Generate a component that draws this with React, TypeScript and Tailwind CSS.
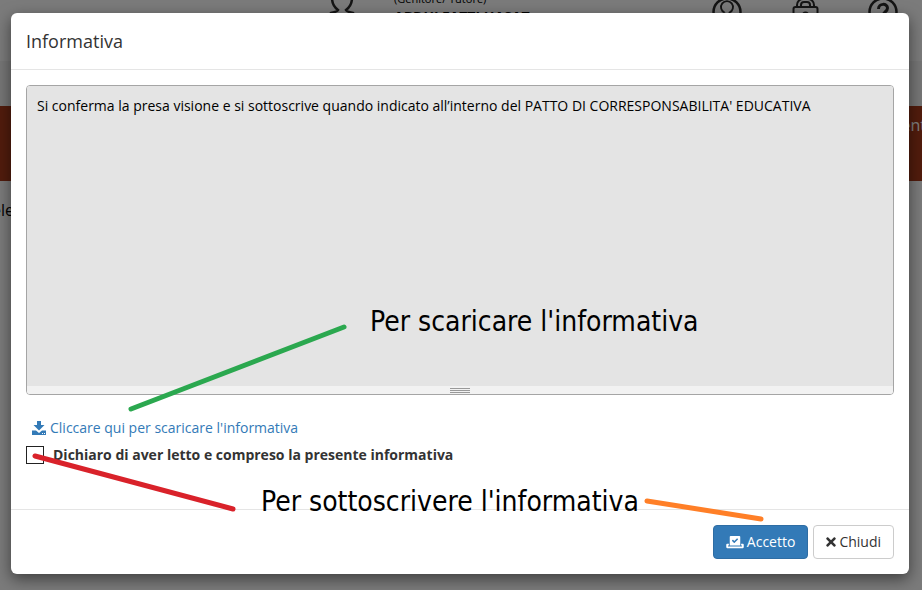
import { useState } from 'react';
import { FaTimes, FaVoteYea } from 'react-icons/fa';

const NOTICE =
    "Si conferma la presa visione e si sottoscrive quando indicato all’interno del PATTO DI CORRESPONSABILITA' EDUCATIVA";

function UserIcon() {
    return (
        <svg width="30" height="30" viewBox="0 0 30 30" fill="none" stroke="#2a2a2a" strokeWidth="2.5">
            <path d="M11 19c-4-3-6-7-6-12a10 9 0 0 1 20 0c0 5-2 9-6 12 1 2 3 2 7 3v7H4v-7c4-1 6-1 7-3z" />
        </svg>
    );
}

function ProfileIcon() {
    return (
        <svg width="30" height="30" viewBox="0 0 30 30" fill="none" stroke="#2a2a2a">
            <circle cx="15" cy="15" r="13.5" strokeWidth="2.5" />
            <path d="M12.5 15.500a6 6 0 1 1 5 0v2l5 2M12.5 15.500v2l-5 2" strokeWidth="1.8" />
        </svg>
    );
}

function PasswordIcon() {
    return (
        <svg width="30" height="30" viewBox="0 0 30 30" fill="none" stroke="#2a2a2a" strokeWidth="2">
            <path d="M7 10V8a6 6 0 0 1 6-6h5a6 6 0 0 1 6 6v2M11 10V8a3 3 0 0 1 3-3h3a3 3 0 0 1 3 3v2z" />
            <rect x="3.500" y="10" width="24" height="19" rx="2" />
            <circle cx="15.500" cy="18" r="2.5" />
        </svg>
    );
}

function HelpIcon() {
    return (
        <svg width="30" height="30" viewBox="0 0 30 30" fill="none" stroke="#2a2a2a">
            <circle cx="15" cy="15" r="13.5" strokeWidth="2.5" />
            <path d="M10.5 12c0-6 9-6 9-1 0 4-4.500 3.500-4.500 8M15 21v3" strokeWidth="3" />
        </svg>
    );
}

function DownloadIcon() {
    return (
        <svg width="14" height="14" viewBox="0 0 14 14" fill="currentColor" aria-hidden="true">
            <path d="M5 0h4v4h3.500L7 9.500 1.500 4H5z" />
            <path fillRule="evenodd" d="M0 9.500h4L7 12l3-2.500h4V14H0zM10 12v1h1v-1zM12 12v1h1v-1z" />
        </svg>
    );
}

function PageBehind() {
    return (
        <div className="text-black">
            <header className="h-[61px] overflow-hidden bg-[#f6f6f6]">
                <div className="-mt-[10px] flex items-start pl-[327px] pr-6">
                    <div className="pt-[1px]">
                        <UserIcon />
                    </div>
                    <div className="ml-[37px] flex-1 whitespace-nowrap leading-4">
                        <p className="pt-px text-[11px]">(Genitore/ Tutore)</p>
                        <p className="text-sm font-bold">ABDULFATTI HASAT</p>
                    </div>
                    <nav className="flex gap-12 pt-[7px]">
                        <a href="#profilo" aria-label="Profilo"><ProfileIcon /></a>
                        <a href="#password" aria-label="Password"><PasswordIcon /></a>
                        <a href="#aiuto" aria-label="Aiuto"><HelpIcon /></a>
                    </nav>
                </div>
            </header>
            <div className="h-[45px] bg-[#ececec]" />
            <div className="flex h-[75px] justify-end bg-[#a4381b] pt-[7px]">
                <span className="-mr-1 text-base text-white">ent</span>
            </div>
            <p className="-ml-2 pt-[15px] text-base leading-7">ele</p>
        </div>
    );
}

function Annotations() {
    return (
        <div className="pointer-events-none absolute inset-0 font-['DejaVu_Sans_Condensed','DejaVu_Sans',sans-serif] text-[28px] leading-8 text-black">
            <svg className="absolute left-0 top-0" width="922" height="590" fill="none" strokeWidth="5" strokeLinecap="round">
                <path d="M131 409L344 327" stroke="#2ba84f" />
                <path d="M35 456L233 509" stroke="#d9222a" />
                <path d="M647 501L761 519" stroke="#ff7f27" />
            </svg>
            <p className="absolute left-[370px] top-[306px] whitespace-nowrap">Per scaricare l'informativa</p>
            <p className="absolute left-[261px] top-[486px] whitespace-nowrap">Per sottoscrivere l'informativa</p>
        </div>
    );
}

export default function App() {
    const [accepted, setAccepted] = useState(false);

    return (
        <div className="relative h-screen overflow-hidden bg-[#f6f6f6] font-['Open_Sans','Noto_Sans',sans-serif] text-sm text-[#333]">
            <PageBehind />

            <div className="absolute inset-0 bg-black/50 pl-[11px] pr-[13px] pt-[13px]">
                <div
                    role="dialog"
                    aria-labelledby="dialog-title"
                    className="rounded-md bg-white shadow-[0_5px_15px_rgba(0,0,0,0.5)]"
                >
                    <div className="border-b border-[#e5e5e5] p-[15px]">
                        <h4 id="dialog-title" className="text-lg leading-[26px]">Informativa</h4>
                    </div>

                    <div className="px-[15px] pt-[15px]">
                        <div className="overflow-hidden rounded-[4px] border border-[#a5a5a5]">
                            <textarea
                                readOnly
                                aria-label="Testo dell'informativa"
                                value={NOTICE}
                                className="block h-[300px] w-full resize-none bg-[#e4e4e4] px-[10px] py-[10px] leading-5 text-black outline-none"
                            />
                            <div className="flex h-2 flex-col items-center justify-center gap-px bg-[#f2f2f2]">
                                <span className="h-px w-5 bg-[#999]" />
                                <span className="h-px w-5 bg-[#999]" />
                                <span className="h-px w-5 bg-[#999]" />
                            </div>
                        </div>

                        <a href="#informativa" className="ml-[6px] mt-[23px] inline-flex items-center gap-1 leading-5 text-[#337ab7]">
                            <DownloadIcon />
                            Cliccare qui per scaricare l'informativa
                        </a>

                        <label className="mt-[5px] flex items-center gap-[9px] font-bold leading-5">
                            <input
                                type="checkbox"
                                checked={accepted}
                                onChange={(e) => setAccepted(e.target.checked)}
                                className="size-[18px] appearance-none border border-[#222] bg-white checked:bg-[#337ab7]"
                            />
                            Dichiaro di aver letto e compreso la presente informativa
                        </label>
                    </div>

                    <div className="mt-11 flex justify-end gap-[5px] border-t border-[#e5e5e5] p-[15px]">
                        <button
                            type="button"
                            className="flex items-center gap-[3px] rounded-[4px] border border-[#2e6da4] bg-[#337ab7] px-3 py-[6px] leading-5 text-white"
                        >
                            <FaVoteYea className="h-[14px] w-[18px]" />
                            Accetto
                        </button>
                        <button
                            type="button"
                            className="flex items-center gap-[3px] rounded-[4px] border border-[#ccc] bg-white px-3 py-[6px] leading-5"
                        >
                            <FaTimes className="h-[14px] w-[10px]" />
                            Chiudi
                        </button>
                    </div>
                </div>
            </div>

            <Annotations />
        </div>
    );
}
